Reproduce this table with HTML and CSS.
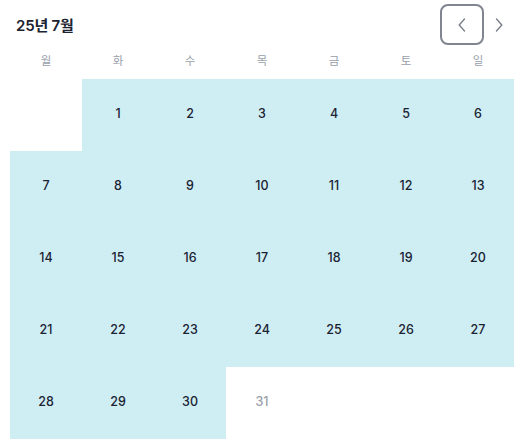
FILE: index.html
```html
<!DOCTYPE html>
<html lang="ko">
<head>
<meta charset="utf-8">
<link rel="stylesheet" href="styles.css">
</head>
<body>
<div class="cal">
  <div class="head">
    <div class="title">25년 7월</div>
    <div class="nav">
      <button class="btn prev" aria-label="이전 달">
        <svg width="8" height="14" viewBox="0 0 8 14"><path d="M6.5 1 L1.2 7 L6.5 13" fill="none" stroke="#7b808a" stroke-width="1.4" stroke-linecap="round" stroke-linejoin="round"/></svg>
      </button>
      <button class="btn next" aria-label="다음 달">
        <svg width="8" height="14" viewBox="0 0 8 14"><path d="M1.5 1 L6.8 7 L1.5 13" fill="none" stroke="#7b808a" stroke-width="1.4" stroke-linecap="round" stroke-linejoin="round"/></svg>
      </button>
    </div>
  </div>
  <div class="weekdays">
    <div>월</div><div>화</div><div>수</div><div>목</div><div>금</div><div>토</div><div>일</div>
  </div>
  <div class="grid">
    <div class="day empty"></div>
    <div class="day in">1</div>
    <div class="day in">2</div>
    <div class="day in">3</div>
    <div class="day in">4</div>
    <div class="day in">5</div>
    <div class="day in">6</div>
    <div class="day in">7</div>
    <div class="day in">8</div>
    <div class="day in">9</div>
    <div class="day in">10</div>
    <div class="day in">11</div>
    <div class="day in">12</div>
    <div class="day in">13</div>
    <div class="day in">14</div>
    <div class="day in">15</div>
    <div class="day in">16</div>
    <div class="day in">17</div>
    <div class="day in">18</div>
    <div class="day in">19</div>
    <div class="day in">20</div>
    <div class="day in">21</div>
    <div class="day in">22</div>
    <div class="day in">23</div>
    <div class="day in">24</div>
    <div class="day in">25</div>
    <div class="day in">26</div>
    <div class="day in">27</div>
    <div class="day in">28</div>
    <div class="day in">29</div>
    <div class="day in">30</div>
    <div class="day out">31</div>
  </div>
</div>
</body>
</html>
```
FILE: styles.css
```css
* { box-sizing: border-box; }
html, body { margin: 0; padding: 0; background: #fff; }
body {
  font-family: Inter, "Noto Sans CJK KR", sans-serif;
  color: #1b2333;
}
.cal {
  width: 523px;
  padding: 4px 9px 0 10px;
}
.head {
  display: flex;
  align-items: center;
  justify-content: space-between;
  height: 41px;
}
.title {
  padding-left: 6px;
  font-size: 15px;
  font-weight: 600;
  letter-spacing: -0.2px;
  color: #1b2230;
}
.nav {
  display: flex;
  align-items: center;
  height: 41px;
}
.btn {
  display: flex;
  align-items: center;
  justify-content: center;
  background: #fff;
  padding: 0;
  cursor: pointer;
}
.prev {
  width: 44px;
  height: 41px;
  border: 2px solid #80858f;
  border-radius: 8px;
}
.next {
  width: 30px;
  height: 41px;
  border: none;
}
.weekdays {
  display: grid;
  grid-template-columns: repeat(7, 72px);
  height: 34px;
  line-height: 32px;
  text-align: center;
  font-size: 11.5px;
  color: #9aa1ab;
}
.grid {
  display: grid;
  grid-template-columns: repeat(7, 72px);
  grid-auto-rows: 72px;
}
.day {
  display: flex;
  align-items: center;
  justify-content: center;
  font-size: 12.5px;
  font-weight: 500;
  padding-bottom: 3px;
}
.in { background: #cfeef4; color: #1b2333; }
.out { background: #fff; color: #9aa0aa; }
```
